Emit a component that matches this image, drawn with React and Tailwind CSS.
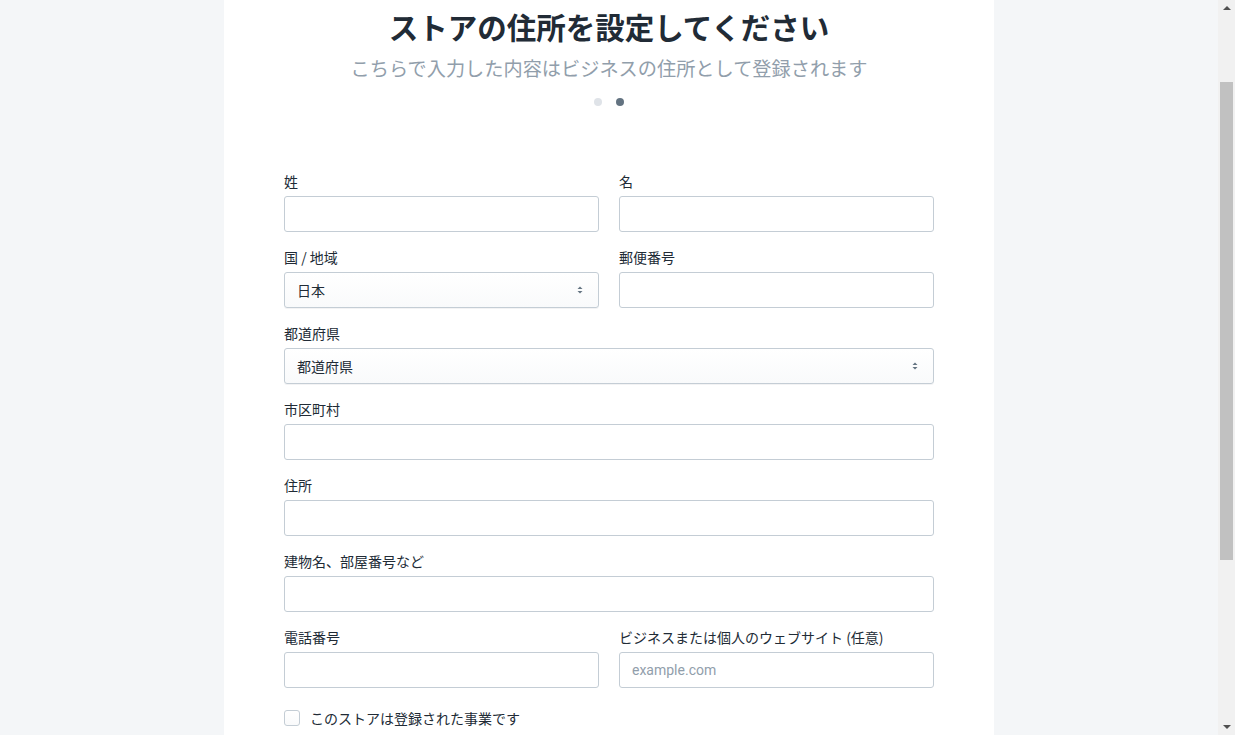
import React, { useLayoutEffect } from 'react'

const FONT = { fontFamily: '"Noto Sans CJK JP", "Noto Sans", sans-serif' }

function Label({ children }) {
  return <div className="h-5 mb-1 text-[14px] leading-[18px] text-[#212b36]">{children}</div>
}

function TextField({ label, placeholder }) {
  return (
    <div className="flex-1">
      <Label>{label}</Label>
      <input
        placeholder={placeholder}
        className="block w-full h-9 px-3 rounded-[3px] border border-[#c4cdd5] bg-white text-[14px] text-[#212b36] placeholder:text-[#919eab] outline-none"
        style={{ fontFamily: 'Roboto, "Liberation Sans", sans-serif' }}
      />
    </div>
  )
}

function SelectField({ label, value }) {
  return (
    <div className="flex-1">
      <Label>{label}</Label>
      <div className="relative flex items-center h-9 px-3 rounded-[3px] border border-[#c4cdd5] bg-gradient-to-b from-white to-[#f9fafb] shadow-[0_1px_0_rgba(22,29,37,0.05)] text-[14px] text-[#212b36]">
        <span>{value}</span>
        <svg className="absolute right-[15px] top-1/2 -translate-y-1/2" width="6" height="10" viewBox="0 0 6 10">
          <path d="M3 1.5 L5.5 4 H0.5 Z" fill="#637381" />
          <path d="M3 8.5 L5.5 6 H0.5 Z" fill="#637381" />
        </svg>
      </div>
    </div>
  )
}

// the browser's own scrollbar does not show in headless mode, so draw it
function Scrollbar() {
  return (
    <div className="fixed top-0 right-0 w-[17px] h-screen bg-[#f1f1f1] flex flex-col">
      <div className="h-[17px] flex items-center justify-center">
        <svg width="8" height="5" viewBox="0 0 8 5">
          <path d="M4 0 L8 4 H0 Z" fill="#505050" />
        </svg>
      </div>
      <div className="flex-1 px-[2px] pt-[65px] pb-[158px]">
        <div className="h-full bg-[#c1c1c1]" />
      </div>
      <div className="h-[17px] flex items-center justify-center">
        <svg width="8" height="5" viewBox="0 0 8 5">
          <path d="M4 5 L8 1 H0 Z" fill="#505050" />
        </svg>
      </div>
    </div>
  )
}

export default function App() {
  useLayoutEffect(() => {
    window.scrollTo(0, 100)
  }, [])

  return (
    <div className="min-h-screen bg-[#f4f6f8] pr-[17px]" style={FONT}>
      <div className="mx-auto w-[770px] bg-white pt-[108px] pb-[252px]">
        <h1 className="text-center text-[29.5px] leading-9 font-bold text-[#212b36]">
          ストアの住所を設定してください
        </h1>
        <p className="mt-[10px] text-center text-[19.2px] leading-7 text-[#919eab]">
          こちらで入力した内容はビジネスの住所として登録されます
        </p>
        <div className="mt-4 flex justify-center gap-[14px]">
          <span className="w-2 h-2 rounded-full bg-[#dfe3e8]" />
          <span className="w-2 h-2 rounded-full bg-[#637381]" />
        </div>

        <div className="mt-[66px] px-[60px] flex flex-col gap-4">
          <div className="flex gap-5">
            <TextField label="姓" />
            <TextField label="名" />
          </div>
          <div className="flex gap-5">
            <SelectField label="国 / 地域" value="日本" />
            <TextField label="郵便番号" />
          </div>
          <SelectField label="都道府県" value="都道府県" />
          <TextField label="市区町村" />
          <TextField label="住所" />
          <TextField label="建物名、部屋番号など" />
          <div className="flex gap-5">
            <TextField label="電話番号" />
            <TextField label="ビジネスまたは個人のウェブサイト (任意)" placeholder="example.com" />
          </div>
          <label className="mt-[6px] flex items-center gap-[10px] h-4 text-[14px] leading-4 text-[#212b36]">
            <span className="w-4 h-4 rounded-[3px] border border-[#c4cdd5] bg-gradient-to-b from-white to-[#f9fafb]" />
            このストアは登録された事業です
          </label>
        </div>
      </div>
      <Scrollbar />
    </div>
  )
}
